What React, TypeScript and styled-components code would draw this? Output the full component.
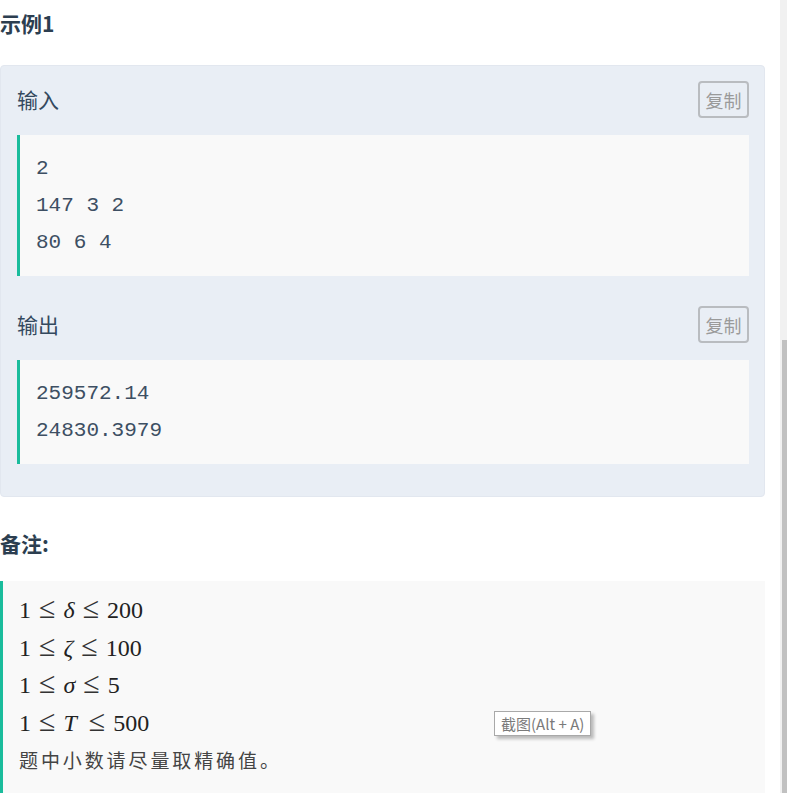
import React from "react";
import styled, { createGlobalStyle } from "styled-components";

const Global = createGlobalStyle`
  html, body {
    margin: 0;
    padding: 0;
    height: 100%;
    overflow: hidden;
    background: #ffffff;
  }
  body {
    font-family: "Noto Sans CJK SC", "Noto Sans", sans-serif;
  }
`;

const Page = styled.div`
  display: flex;
  width: 787px;
  height: 793px;
  overflow: hidden;
`;

const Main = styled.div`
  width: 765px;
  display: flex;
  flex-direction: column;
  flex-shrink: 0;
`;

const Gutter = styled.div`
  flex: 1;
`;

const ScrollTrack = styled.div`
  width: 7px;
  background: #f1f1f1;
  display: flex;
  flex-direction: column;
`;

const ScrollThumb = styled.div`
  margin-top: 340px;
  margin-left: 2px;
  flex: 1;
  background: #c1c1c1;
`;

const Heading = styled.h3<{ $top: number; $bottom: number }>`
  margin: ${(p) => p.$top}px 0 ${(p) => p.$bottom}px;
  font-family: "Noto Sans CJK SC", "Noto Sans", sans-serif;
  font-size: 21px;
  font-weight: 700;
  line-height: 28px;
  color: #2c3e50;
`;

const Card = styled.div`
  background: #e9eef5;
  border: 1px solid #e2e7ef;
  border-radius: 4px;
  padding: 15px 15px 2px 16px;
`;

const Section = styled.div`
  display: flex;
  flex-direction: column;
  margin-bottom: 30px;
`;

const SectionHead = styled.div`
  display: flex;
  align-items: center;
  justify-content: space-between;
  height: 37px;
  margin-bottom: 17px;
`;

const Label = styled.span`
  font-size: 21px;
  color: #34495e;
  line-height: 1;
`;

const CopyButton = styled.button`
  box-sizing: border-box;
  width: 51px;
  height: 37px;
  padding: 0;
  border: 2px solid #b9bcc0;
  border-radius: 4px;
  background: transparent;
  color: #9a9a9a;
  font-family: "Noto Sans CJK SC", "Noto Sans", sans-serif;
  font-size: 18px;
  line-height: 1;
  cursor: pointer;
`;

const CodeBlock = styled.pre`
  margin: 0;
  background: #f9f9f9;
  border-left: 3px solid #1abc9c;
  padding: 15px 16px;
  font-family: "Liberation Mono", "Courier New", monospace;
  font-size: 21px;
  line-height: 37px;
  color: #3d4f63;
  white-space: pre;
`;

const NoteBlock = styled.div`
  position: relative;
  flex: 1;
  background: #f9f9f9;
  border-left: 3px solid #1abc9c;
  padding: 11px 0 0 16px;
`;

const MathLine = styled.div`
  font-family: "Liberation Serif", "DejaVu Serif", serif;
  font-size: 24px;
  line-height: 37.5px;
  height: 37.5px;
  color: #222;
  white-space: nowrap;
`;

const Var = styled.i<{ $after?: number }>`
  font-style: italic;
  margin-right: ${(p) => p.$after ?? 0}px;
`;

const Rel = styled.span`
  display: inline-block;
  font-size: 30px;
  line-height: 1;
  margin: 0 8px;
  color: #333;
`;

const NoteText = styled.div`
  font-family: "Noto Sans CJK SC", serif;
  font-size: 19px;
  line-height: 36px;
  letter-spacing: 2.9px;
  color: #444;
`;

const Tooltip = styled.div`
  position: absolute;
  left: 491px;
  top: 130px;
  box-sizing: border-box;
  height: 25px;
  padding: 0 6px;
  display: flex;
  align-items: center;
  background: #ffffff;
  border: 1px solid #a9a9a9;
  box-shadow: 3px 3px 3px rgba(0, 0, 0, 0.25);
  font-family: "Noto Sans CJK SC", "Noto Sans", sans-serif;
  font-size: 15px;
  color: #7a7a7a;
  white-space: nowrap;
`;

type Sample = { label: string; lines: string[] };

const samples: Sample[] = [
  { label: "输入", lines: ["2", "147 3 2", "80 6 4"] },
  { label: "输出", lines: ["259572.14", "24830.3979"] },
];

const constraints: { v: string; max: string; after?: number }[] = [
  { v: "δ", max: "200" },
  { v: "ζ", max: "100" },
  { v: "σ", max: "5" },
  { v: "T", max: "500", after: 4 },
];

export default function App() {
  return (
    <>
      <Global />
      <Page>
        <Main>
          <Heading $top={9} $bottom={28}>示例1</Heading>
          <Card>
            {samples.map((s) => (
              <Section key={s.label}>
                <SectionHead>
                  <Label>{s.label}</Label>
                  <CopyButton>复制</CopyButton>
                </SectionHead>
                <CodeBlock>{s.lines.join("\n")}</CodeBlock>
              </Section>
            ))}
          </Card>
          <Heading $top={32} $bottom={24}>备注:</Heading>
          <NoteBlock>
            {constraints.map((c) => (
              <MathLine key={c.v}>
                1<Rel>≤</Rel>
                <Var $after={c.after}>{c.v}</Var>
                <Rel>≤</Rel>
                {c.max}
              </MathLine>
            ))}
            <NoteText>题中小数请尽量取精确值。</NoteText>
            <Tooltip>截图(Alt + A)</Tooltip>
          </NoteBlock>
        </Main>
        <Gutter />
        <ScrollTrack>
          <ScrollThumb />
        </ScrollTrack>
      </Page>
    </>
  );
}
